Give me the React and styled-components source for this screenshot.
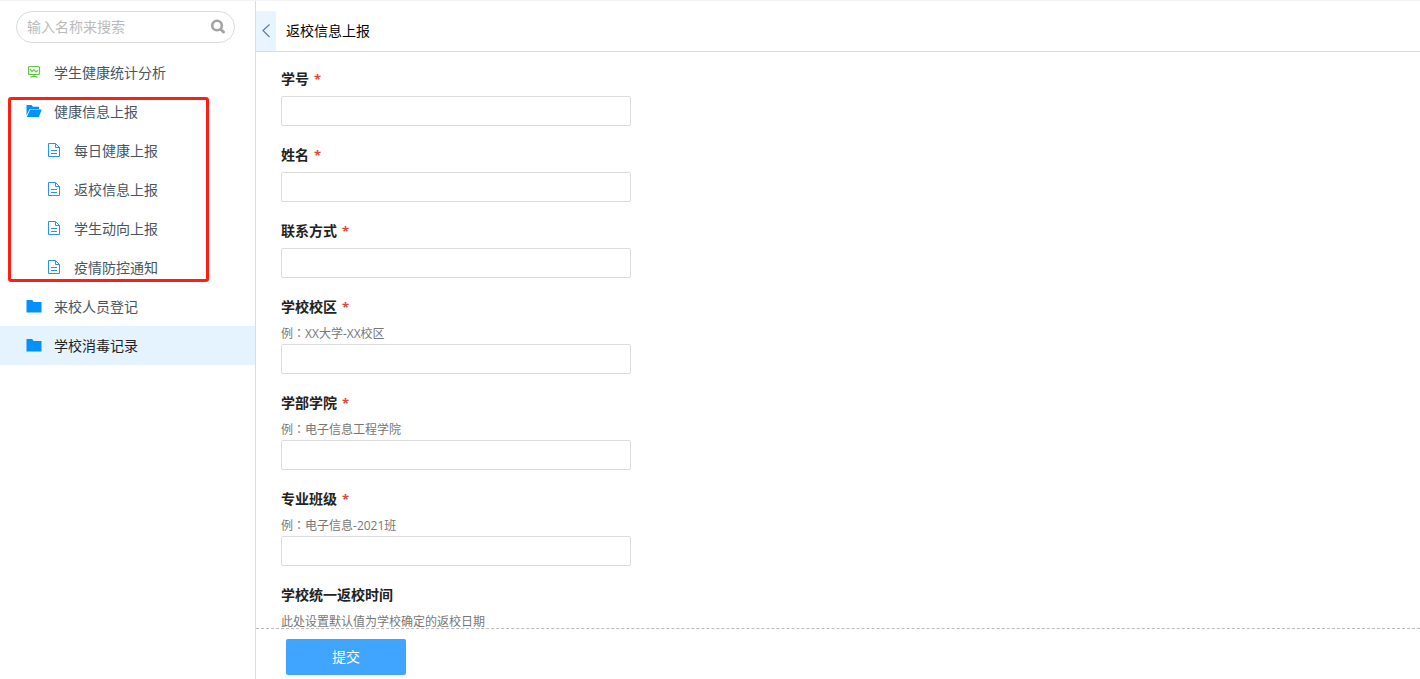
import React, { useState } from 'react';
import styled, { createGlobalStyle } from 'styled-components';

const BLUE = '#0091ff';
const BORDER = '#dcdcdc';
const TEXT = '#485563';

const Global = createGlobalStyle`
  *,
  *::after {
    box-sizing: border-box;
  }

  body {
    margin: 0;
    font-family: "Open Sans", "Noto Sans CJK SC", sans-serif;
    font-size: 14px;
    line-height: 20px;
    color: #222;
    background: #fff;
  }

  button,
  input {
    font: inherit;
  }
`;

const Page = styled.div`
  display: flex;
  height: 100vh;
  border-top: 1px solid #f4f4f4;
`;

const Sidebar = styled.aside`
  flex: none;
  width: 256px;
  border-right: 1px solid ${BORDER};
`;

const SearchBox = styled.label`
  display: flex;
  align-items: center;
  height: 32px;
  margin: 10px 20px 10px 16px;
  padding: 0 8px 0 10px;
  border: 1px solid ${BORDER};
  border-radius: 16px;
`;

const SearchInput = styled.input`
  flex: 1;
  min-width: 0;
  padding: 0;
  border: 0;
  outline: 0;
  background: none;

  &::placeholder {
    color: #bbb;
    opacity: 1;
  }
`;

const List = styled.ul`
  margin: 0;
  padding: 0;
  list-style: none;
`;

const Group = styled.li`
  position: relative;

  ${({ $marked }) =>
    $marked &&
    `&::after {
      content: '';
      position: absolute;
      top: 5px;
      bottom: 5px;
      left: 8px;
      width: 201px;
      border: 3px solid #ff1e14;
      border-radius: 3px;
      pointer-events: none;
    }`}
`;

const NavLink = styled.a`
  display: flex;
  align-items: center;
  gap: 12px;
  height: 39px;
  padding-left: ${({ $child }) => ($child ? '46px' : '26px')};
  color: ${({ $active }) => ($active ? '#222' : TEXT)};
  background: ${({ $active }) => ($active ? '#e5f3ff' : 'transparent')};
  text-decoration: none;

  svg {
    flex: none;
    margin-bottom: 2px;
  }
`;

const Main = styled.main`
  flex: 1;
  min-width: 0;
  display: flex;
  flex-direction: column;
`;

const Header = styled.header`
  flex: none;
  display: flex;
  gap: 10px;
  padding-top: 10px;
  border-bottom: 1px solid ${BORDER};
`;

const CollapseButton = styled.button`
  display: flex;
  align-items: center;
  justify-content: center;
  width: 20px;
  height: 40px;
  padding: 0;
  border: 0;
  border-radius: 0 2px 2px 0;
  background: #e8f4ff;
  cursor: pointer;
`;

const Title = styled.h1`
  margin: 0;
  font-size: 14px;
  font-weight: 400;
  line-height: 40px;
  color: #000;
`;

const Form = styled.form`
  flex: 1;
  min-height: 0;
  display: flex;
  flex-direction: column;
`;

const Fields = styled.div`
  flex: 1;
  min-height: 0;
  padding: 17px 25px;
  overflow-y: auto;
  scrollbar-width: none;
`;

const Field = styled.div`
  margin-bottom: 19px;
`;

const Label = styled.label`
  display: block;
  margin-bottom: 7px;
  font-weight: 700;
`;

const Required = styled.span`
  margin-left: 5px;
  font-size: 13px;
  color: #e0453c;
`;

const Hint = styled.p`
  margin: 0;
  font-size: 12px;
  color: #777;
`;

// full-width colon, centred in its cell
const Colon = styled.span`
  font-family: "Noto Sans CJK TC", sans-serif;
  line-height: 12px;
`;

const TextInput = styled.input`
  display: block;
  width: 350px;
  max-width: 100%;
  height: 30px;
  padding: 0 8px;
  border: 1px solid ${BORDER};
  border-radius: 2px;
  outline: 0;

  &:focus {
    border-color: ${BLUE};
  }
`;

const Footer = styled.footer`
  flex: none;
  padding: 10px 30px 4px;
  border-top: 1px dashed #bbb;
`;

const SubmitButton = styled.button`
  display: block;
  width: 120px;
  height: 36px;
  border: 0;
  border-radius: 2px;
  color: #fff;
  background: #40a5ff;
  cursor: pointer;
`;

const SearchIcon = () => (
  <svg width="16" height="16" viewBox="0 0 16 16" fill="none" stroke="#a3a3a3">
    <circle cx="7" cy="6.5" r="4.8" strokeWidth="2.6" />
    <path d="M10.8 10.5L13.5 13" strokeWidth="3" strokeLinecap="round" />
  </svg>
);

const BoardIcon = () => (
  <svg width="16" height="16" viewBox="0 0 16 16" fill="none" stroke="#62c846" strokeWidth="1.2">
    <rect x="2.5" y="2.5" width="11" height="8" rx="1" />
    <path d="M4 5L6.2 7.5L8 5.8L10 8L12 6.3M8 10.5V13M4.5 13.5L6.5 12.3H9.5L11.5 13.5" />
  </svg>
);

const FolderIcon = () => (
  <svg width="16" height="16" viewBox="0 0 16 16" fill={BLUE}>
    <path d="M.5 2H6.2L7.6 4H15.5V14.5H.5Z" />
  </svg>
);

const FolderOpenIcon = () => (
  <svg width="16" height="16" viewBox="0 0 16 16" fill={BLUE}>
    <path d="M.5 2H5.5L7 3.8H13V6H3.7L.5 12.5Z" />
    <path d="M4.2 6.6H15.7L13 14H.8Z" />
  </svg>
);

const FileIcon = () => (
  <svg width="16" height="16" viewBox="0 0 16 16" fill="none" stroke="#2b8fff">
    <path d="M2.5 1.5H9.5L13.5 5.5V14.5H2.5ZM9.5 1.5V5.5H13.5M5 8.5H11M5 11.5H11" />
  </svg>
);

const ChevronIcon = () => (
  <svg width="10" height="16" viewBox="0 0 10 16" fill="none" stroke="#5b7fae" strokeWidth="1.2">
    <path d="M8.5 1.5L2 7.5L8.5 14" />
  </svg>
);

const reports = ['每日健康上报', '返校信息上报', '学生动向上报', '疫情防控通知'];

const fields = [
  { id: 'number', label: '学号', required: true },
  { id: 'name', label: '姓名', required: true },
  { id: 'phone', label: '联系方式', required: true },
  { id: 'campus', label: '学校校区', required: true, example: 'XX大学-XX校区' },
  { id: 'college', label: '学部学院', required: true, example: '电子信息工程学院' },
  { id: 'class', label: '专业班级', required: true, example: '电子信息-2021班' },
  { id: 'date', label: '学校统一返校时间', hint: '此处设置默认值为学校确定的返校日期' },
];

const FormField = ({ id, label, required, example, hint }) => (
  <Field>
    <Label htmlFor={id}>
      {label}
      {required && <Required>*</Required>}
    </Label>
    {example && (
      <Hint>
        例<Colon>：</Colon>
        {example}
      </Hint>
    )}
    {hint && <Hint>{hint}</Hint>}
    <TextInput id={id} name={id} type="text" />
  </Field>
);

export default function App() {
  const [collapsed, setCollapsed] = useState(false);

  return (
    <>
      <Global />
      <Page>
        {!collapsed && (
          <Sidebar>
            <SearchBox>
              <SearchInput type="text" placeholder="输入名称来搜索" aria-label="输入名称来搜索" />
              <SearchIcon />
            </SearchBox>
            <nav>
              <List>
                <Group>
                  <NavLink href="#stats">
                    <BoardIcon />
                    学生健康统计分析
                  </NavLink>
                </Group>
                <Group $marked>
                  <NavLink href="#health">
                    <FolderOpenIcon />
                    健康信息上报
                  </NavLink>
                  <List>
                    {reports.map(name => (
                      <li key={name}>
                        <NavLink href="#report" $child>
                          <FileIcon />
                          {name}
                        </NavLink>
                      </li>
                    ))}
                  </List>
                </Group>
                <Group>
                  <NavLink href="#visitors">
                    <FolderIcon />
                    来校人员登记
                  </NavLink>
                </Group>
                <Group>
                  <NavLink href="#disinfection" $active>
                    <FolderIcon />
                    学校消毒记录
                  </NavLink>
                </Group>
              </List>
            </nav>
          </Sidebar>
        )}
        <Main>
          <Header>
            <CollapseButton type="button" aria-label="收起" onClick={() => setCollapsed(!collapsed)}>
              <ChevronIcon />
            </CollapseButton>
            <Title>返校信息上报</Title>
          </Header>
          <Form onSubmit={e => e.preventDefault()}>
            <Fields>
              {fields.map(field => (
                <FormField key={field.id} {...field} />
              ))}
            </Fields>
            <Footer>
              <SubmitButton type="submit">提交</SubmitButton>
            </Footer>
          </Form>
        </Main>
      </Page>
    </>
  );
}
